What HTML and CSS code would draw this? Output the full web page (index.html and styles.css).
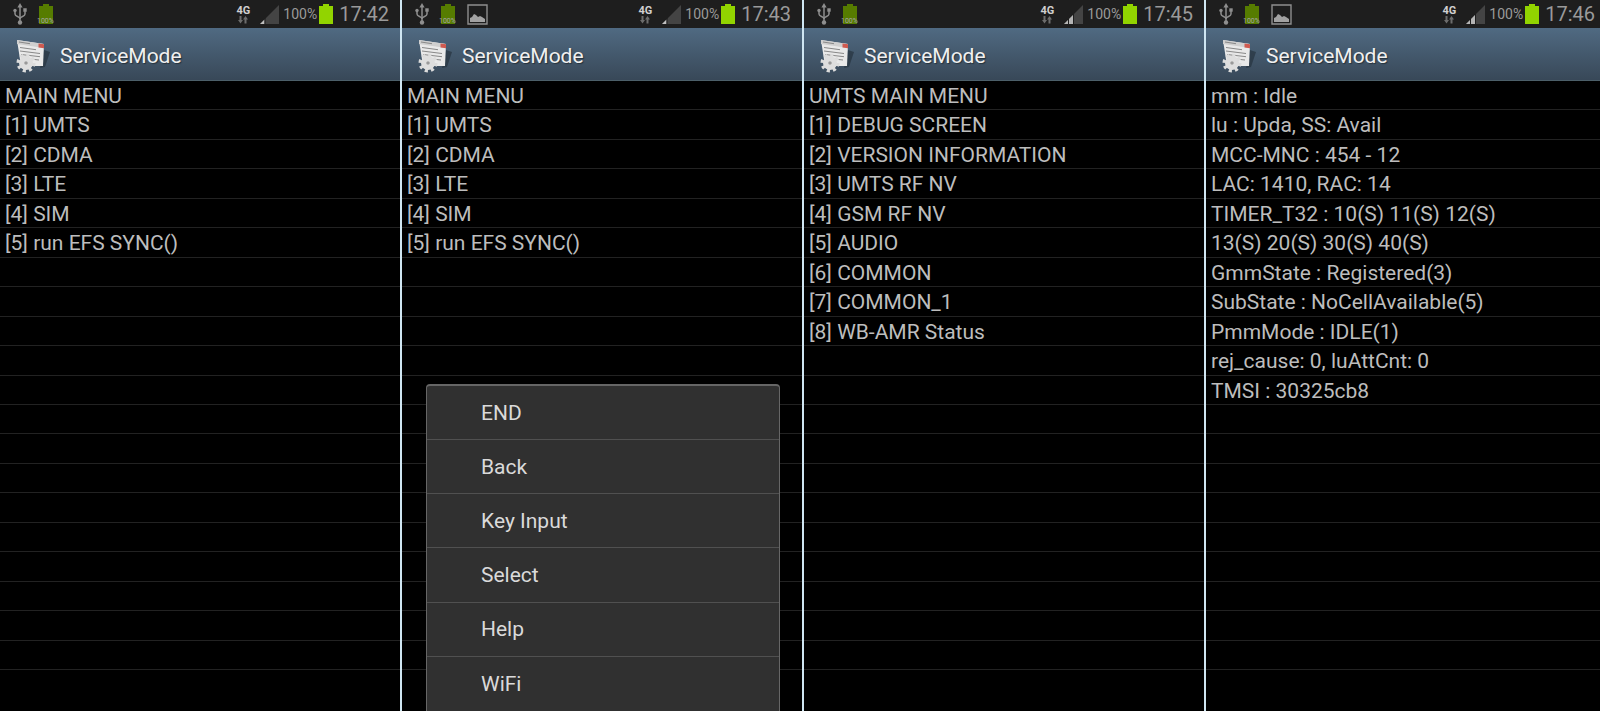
FILE: index.html
```
<!DOCTYPE html>
<html lang="en">
  <head>
    <meta charset="UTF-8" />
    <meta name="viewport" content="width=device-width, initial-scale=1.0" />
    <title>ServiceMode</title>
    <link rel="stylesheet" href="styles.css">
  </head>
  <body>
    <!-- shared icons -->
    <svg class="sprite" aria-hidden="true">
      <symbol id="icon-usb" viewBox="0 0 14 22">
        <g fill="none" stroke="#8e8e8e" stroke-width="1.5">
          <path d="M7 19V3" />
          <path d="M7 16C7 13 2 14 2 11V8" />
          <path d="M7 16C7 13 12 14 12 11V7" />
        </g>
        <g fill="#8e8e8e">
          <path d="M7 0l2.6 4.4H4.4z" />
          <circle cx="7" cy="19.5" r="2.2" />
          <circle cx="2" cy="7.5" r="1.7" />
          <path d="M10.3 5.3h3.4v3.4h-3.4z" />
        </g>
      </symbol>
      <symbol id="icon-battery" viewBox="0 0 14 20">
        <path d="M4 0h6v2h4v18H0V2h4z" fill="currentColor" />
      </symbol>
      <symbol id="icon-picture" viewBox="0 0 21 21">
        <path d="M1 1h19v19H1z" fill="none" stroke="#8e8e8e" stroke-width="1.4" />
        <path d="M3 18v-4l2-1 2-3 2 1 2 2 2-1 2 1 3 2v3z" fill="#a2a2a2" />
      </symbol>
      <symbol id="icon-arrows" viewBox="0 0 12 8">
        <path d="M2.5 0h2v4H6L3.5 7.5 1 4h1.5zM7.5 7.5h2V3.5H11L8.5 0 6 3.5h1.5z" fill="#6c6c6c" />
      </symbol>
      <symbol id="icon-signal-1" viewBox="0 0 19 19">
        <path d="M0 19L19 0v19z" fill="#444" />
        <path d="M0 19l4.5-4.5V19z" fill="#c0c0c0" />
        <path d="M5 13v6" stroke="#1e1e1e" />
      </symbol>
      <symbol id="icon-signal-2" viewBox="0 0 19 19">
        <path d="M0 19L19 0v19z" fill="#444" />
        <path d="M0 19l9-9v9z" fill="#b4b4b4" />
        <path d="M4.5 13v6M9.5 8v11" stroke="#1e1e1e" />
      </symbol>
      <symbol id="icon-app" viewBox="0 0 36 34">
        <path d="M28 11l6 2-5 15-5 1z" fill="#26333f" opacity=".7" />
        <path d="M1 1l27 4-1 22H5z" fill="#e9e9e9" />
        <path d="M1 1l27 4v4L1 5z" fill="#cfcfcf" />
        <path d="M22.5 4.500l5.5.8v4l-5.5-.8z" fill="#cf5a50" />
        <path d="M3 3l11 1.700M4 8.500l16 2.200M4 12l20 2.500M5 15.500l19 2.200M14 20l9 1" stroke="#888" fill="none" />
        <circle cx="10" cy="24" r="7.500" fill="none" stroke="#dcdcdc" stroke-width="4" stroke-dasharray="3 2.890" />
        <circle cx="10" cy="24" r="4.500" fill="none" stroke="#dedede" stroke-width="5" />
        <circle cx="10" cy="24" r="1.800" fill="#999" />
      </symbol>
    </svg>

    <main class="screens">
      <section class="screen">
        <div class="status-bar">
          <div class="notifications">
            <svg class="usb"><use href="#icon-usb" /></svg>
            <div class="charge">
              <svg class="battery"><use href="#icon-battery" /></svg>
              <span class="charge-label">100%</span>
            </div>
          </div>
          <div class="network">
            <span>4G</span>
            <svg class="arrows"><use href="#icon-arrows" /></svg>
          </div>
          <svg class="signal"><use href="#icon-signal-1" /></svg>
          <span class="percent">100%</span>
          <svg class="battery full"><use href="#icon-battery" /></svg>
          <time class="clock">17:42</time>
        </div>
        <header class="app-bar">
          <svg class="app-icon"><use href="#icon-app" /></svg>
          <h1>ServiceMode</h1>
        </header>
        <ul class="lines">
          <li>MAIN MENU</li>
          <li>[1] UMTS</li>
          <li>[2] CDMA</li>
          <li>[3] LTE</li>
          <li>[4] SIM</li>
          <li>[5] run EFS SYNC()</li>
          <li></li><li></li><li></li><li></li><li></li><li></li><li></li>
          <li></li><li></li><li></li><li></li><li></li><li></li><li></li>
        </ul>
      </section>

      <section class="screen">
        <div class="status-bar">
          <div class="notifications">
            <svg class="usb"><use href="#icon-usb" /></svg>
            <div class="charge">
              <svg class="battery"><use href="#icon-battery" /></svg>
              <span class="charge-label">100%</span>
            </div>
            <svg class="picture"><use href="#icon-picture" /></svg>
          </div>
          <div class="network">
            <span>4G</span>
            <svg class="arrows"><use href="#icon-arrows" /></svg>
          </div>
          <svg class="signal"><use href="#icon-signal-1" /></svg>
          <span class="percent">100%</span>
          <svg class="battery full"><use href="#icon-battery" /></svg>
          <time class="clock">17:43</time>
        </div>
        <header class="app-bar">
          <svg class="app-icon"><use href="#icon-app" /></svg>
          <h1>ServiceMode</h1>
        </header>
        <ul class="lines">
          <li>MAIN MENU</li>
          <li>[1] UMTS</li>
          <li>[2] CDMA</li>
          <li>[3] LTE</li>
          <li>[4] SIM</li>
          <li>[5] run EFS SYNC()</li>
          <li></li><li></li><li></li><li></li><li></li><li></li><li></li>
          <li></li><li></li><li></li><li></li><li></li><li></li><li></li>
        </ul>
        <div class="options-menu">
          <button type="button">END</button>
          <button type="button">Back</button>
          <button type="button">Key Input</button>
          <button type="button">Select</button>
          <button type="button">Help</button>
          <button type="button">WiFi</button>
        </div>
      </section>

      <section class="screen">
        <div class="status-bar">
          <div class="notifications">
            <svg class="usb"><use href="#icon-usb" /></svg>
            <div class="charge">
              <svg class="battery"><use href="#icon-battery" /></svg>
              <span class="charge-label">100%</span>
            </div>
          </div>
          <div class="network">
            <span>4G</span>
            <svg class="arrows"><use href="#icon-arrows" /></svg>
          </div>
          <svg class="signal"><use href="#icon-signal-2" /></svg>
          <span class="percent">100%</span>
          <svg class="battery full"><use href="#icon-battery" /></svg>
          <time class="clock">17:45</time>
        </div>
        <header class="app-bar">
          <svg class="app-icon"><use href="#icon-app" /></svg>
          <h1>ServiceMode</h1>
        </header>
        <ul class="lines">
          <li>UMTS MAIN MENU</li>
          <li>[1] DEBUG SCREEN</li>
          <li>[2] VERSION INFORMATION</li>
          <li>[3] UMTS RF NV</li>
          <li>[4] GSM RF NV</li>
          <li>[5] AUDIO</li>
          <li>[6] COMMON</li>
          <li>[7] COMMON_1</li>
          <li>[8] WB-AMR Status</li>
          <li></li><li></li><li></li><li></li><li></li><li></li>
          <li></li><li></li><li></li><li></li><li></li>
        </ul>
      </section>

      <section class="screen">
        <div class="status-bar">
          <div class="notifications">
            <svg class="usb"><use href="#icon-usb" /></svg>
            <div class="charge">
              <svg class="battery"><use href="#icon-battery" /></svg>
              <span class="charge-label">100%</span>
            </div>
            <svg class="picture"><use href="#icon-picture" /></svg>
          </div>
          <div class="network">
            <span>4G</span>
            <svg class="arrows"><use href="#icon-arrows" /></svg>
          </div>
          <svg class="signal"><use href="#icon-signal-2" /></svg>
          <span class="percent">100%</span>
          <svg class="battery full"><use href="#icon-battery" /></svg>
          <time class="clock">17:46</time>
        </div>
        <header class="app-bar">
          <svg class="app-icon"><use href="#icon-app" /></svg>
          <h1>ServiceMode</h1>
        </header>
        <ul class="lines">
          <li>mm : Idle</li>
          <li>lu : Upda, SS: Avail</li>
          <li>MCC-MNC : 454 - 12</li>
          <li>LAC: 1410, RAC: 14</li>
          <li>TIMER_T32 : 10(S) 11(S) 12(S)</li>
          <li>13(S) 20(S) 30(S) 40(S)</li>
          <li>GmmState : Registered(3)</li>
          <li>SubState : NoCellAvailable(5)</li>
          <li>PmmMode : IDLE(1)</li>
          <li>rej_cause: 0, luAttCnt: 0</li>
          <li>TMSI : 30325cb8</li>
          <li></li><li></li><li></li><li></li><li></li>
          <li></li><li></li><li></li><li></li>
        </ul>
      </section>
    </main>
  </body>
</html>
```
FILE: styles.css
```
* {
  box-sizing: border-box;
}

body {
  margin: 0;
  background-color: #000;
  color: #bdbdbd;
  font-family: Roboto, 'Liberation Sans', sans-serif;
  font-size: 21px;
}

.sprite {
  display: none;
}

/* the last screen runs 8px past the right edge */
.screens {
  display: flex;
  min-height: 100vh;
  overflow: hidden;
}

.screen {
  position: relative;
  display: flex;
  flex-direction: column;
  flex: 0 0 calc((100% + 8px) / 4);
  border-right: 2px solid #cfe6f2;
}

.status-bar {
  display: flex;
  align-items: center;
  height: 28px;
  padding: 0 11px 0 13px;
  background-color: #1e1e1e;
  color: #9a9a9a;
}

.notifications {
  display: flex;
  align-items: center;
  gap: 12px;
  margin-right: auto;
}

.usb {
  width: 14px;
  height: 22px;
}

.battery {
  display: block;
  width: 14px;
  height: 20px;
  color: #567c00;
}

.battery.full {
  margin: 0 6px 0 2px;
  color: #92d400;
}

.charge {
  position: relative;
}

.charge-label {
  position: absolute;
  bottom: -1px;
  left: -2px;
  color: #a5a5a5;
  font-size: 7px;
  line-height: 8px;
}

.picture {
  width: 21px;
  height: 21px;
}

.network {
  display: flex;
  flex-direction: column;
  align-items: center;
  margin-right: 10px;
  color: #d0d0d0;
  font-size: 11px;
  font-weight: bold;
  line-height: 11px;
}

.arrows {
  width: 12px;
  height: 8px;
}

.signal {
  width: 19px;
  height: 19px;
  margin-right: 4px;
}

.percent {
  font-size: 14px;
}

.clock {
  font-size: 20px;
}

.app-bar {
  display: flex;
  align-items: center;
  gap: 8px;
  height: 53px;
  padding: 3px 0 0 16px;
  border-bottom: 1px solid #4c5f69;
  background: linear-gradient(#506a82, #384858);
}

.app-icon {
  width: 36px;
  height: 34px;
}

h1 {
  margin: 0;
  color: #f0f0f0;
  font-size: 21px;
  font-weight: normal;
  text-shadow: 1px 1px 1px #26323c;
}

.lines {
  display: grid;
  flex: 1;
  grid-auto-rows: 1fr;
  margin: 0 0 41px;
  padding: 0;
  list-style: none;
}

.lines li {
  min-height: 29px;
  padding: 2px 0 0 5px;
  border-bottom: 1px solid #222;
  line-height: 26px;
  white-space: nowrap;
}

.options-menu {
  position: absolute;
  top: 54%;
  right: 22px;
  bottom: 0;
  left: 24px;
  display: grid;
  grid-auto-rows: 1fr;
  border: 1px solid #666;
  border-top-width: 2px;
  border-bottom: 0;
  border-radius: 4px 4px 0 0;
  background-color: #303030;
}

.options-menu button {
  padding: 0 0 0 54px;
  border: 0;
  border-bottom: 1px solid #505050;
  background: none;
  color: #dadada;
  font-family: inherit;
  font-size: 21px;
  text-align: left;
}

.options-menu button:last-child {
  border-bottom: 0;
}
```
